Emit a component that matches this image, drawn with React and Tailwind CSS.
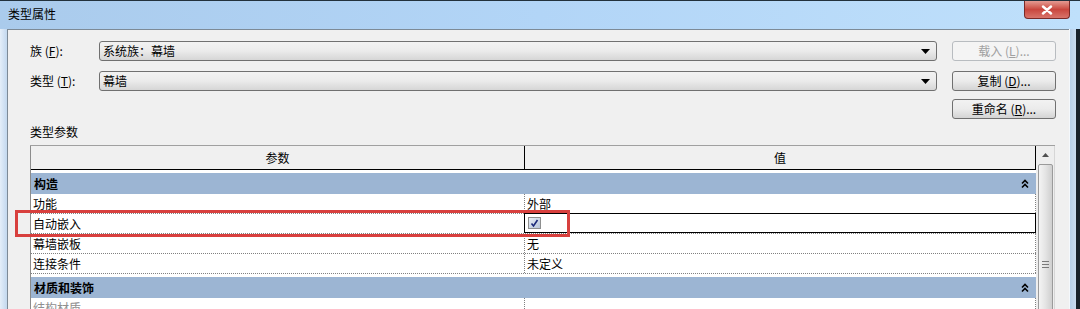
import React from "react";

const font = "font-['Noto_Sans_CJK_SC','Noto_Sans_CJK_JP',sans-serif]";

function Arrow() {
  return (
    <svg width="9" height="5" viewBox="0 0 9 5" className="shrink-0">
      <path d="M0 0 H9 L4.5 5 Z" fill="#000" />
    </svg>
  );
}

function Dropdown({ text }) {
  return (
    <div className="w-[838px] h-[20px] rounded-[3px] border border-[#707070] bg-gradient-to-b from-[#f2f2f2] via-[#ebebeb] to-[#d6d6d6] flex items-center justify-between pl-[3px] pr-[6px]">
      <span className="text-[12px] leading-[18px] text-black">{text}</span>
      <Arrow />
    </div>
  );
}

function Btn({ children, disabled }) {
  return (
    <div
      className={
        disabled
          ? "w-[104px] h-[20px] rounded-[3px] border border-[#b8bcc0] bg-[#f4f4f4] flex items-center justify-center text-[12px] text-[#a0a0a0]"
          : "w-[104px] h-[20px] rounded-[3px] border border-[#707070] bg-gradient-to-b from-[#f2f2f2] via-[#ebebeb] to-[#d4d4d4] flex items-center justify-center text-[12px] text-black"
      }
    >
      {children}
    </div>
  );
}

function Chevrons() {
  return (
    <svg width="8" height="10" viewBox="0 0 8 10">
      <path d="M1 4.5 L4 1.5 L7 4.5" stroke="#000" strokeWidth="1.6" fill="none" />
      <path d="M1 8.5 L4 5.5 L7 8.5" stroke="#000" strokeWidth="1.6" fill="none" />
    </svg>
  );
}

function GroupRow({ label }) {
  return (
    <div className="pt-[3px] bg-white">
      <div className="h-[21px] bg-[#9cb5d3] flex items-center justify-between pl-[3px] pr-[7px]">
        <span className="text-[12px] font-bold text-black">{label}</span>
        <Chevrons />
      </div>
    </div>
  );
}

function DataRow({ label, value, checkbox, muted }) {
  return (
    <div className="h-[20px] flex border-b border-dotted border-[#808080] bg-white">
      <div className={"w-[493px] pl-[2px] text-[12px] leading-[19px] " + (muted ? "text-[#909090]" : "text-black")}>{label}</div>
      {checkbox ? (
        <div className="flex-1 border border-black -mt-px h-[20px] flex items-center pl-[3px]">
          <div className="w-[13px] h-[12px] border border-[#8e8f8f] bg-gradient-to-br from-[#e9eef6] to-[#b9c6da] flex items-center justify-center">
            <svg width="9" height="9" viewBox="0 0 9 9">
              <path d="M1.5 4.5 L3.5 7 L7.5 1" stroke="#1c2a7a" strokeWidth="1.6" fill="none" />
            </svg>
          </div>
        </div>
      ) : (
        <div className="flex-1 border-l border-r border-dotted border-[#808080] pl-[2px] text-[12px] leading-[19px] text-black">{value}</div>
      )}
    </div>
  );
}

export default function App() {
  return (
    <div className={"relative w-[1080px] h-[309px] overflow-hidden bg-[#c5daf0] flex flex-col " + font}>
      {/* Title bar */}
      <div className="h-[29px] shrink-0 border-t border-[#22313c] bg-gradient-to-r from-[#aacbec] via-[#b2d5f7] to-[#bfe0fb] flex items-start justify-between">
        <span className="pl-[8px] pt-[5px] text-[12px] leading-[16px] text-black">类型属性</span>
        <div className="mr-[10px] w-[46px] h-[18px] rounded-b-[4px] border border-t-0 border-[#7a2a28] bg-gradient-to-b from-[#e39a92] via-[#c9463e] to-[#d8736a] flex items-center justify-center">
          <svg width="12" height="10" viewBox="0 0 12 10">
            <path d="M2 1.5 L10 8.5 M10 1.5 L2 8.5" stroke="#ffffff" strokeWidth="2.4" strokeLinecap="round" />
          </svg>
        </div>
      </div>

      {/* Body */}
      <div className="flex flex-1 min-h-0">
        <div className="w-[7px] shrink-0 bg-gradient-to-r from-[#e4eef9] to-[#c3d8ee]" />
        <div className="w-[1062px] shrink-0 bg-[#f0f0f0] border-l border-t border-[#7d8a96] pt-[11px] pl-[22px]">
          <div className="flex items-center h-[20px]">
            <div className="w-[69px] text-[12px] text-black">族 (<span className="underline">F</span>):</div>
            <Dropdown text="系统族：幕墙" />
            <div className="ml-[15px]">
              <Btn disabled>载入 (<span className="underline">L</span>)...</Btn>
            </div>
          </div>
          <div className="flex items-center h-[20px] mt-[10px]">
            <div className="w-[69px] text-[12px] text-black">类型 (<span className="underline">T</span>):</div>
            <Dropdown text="幕墙" />
            <div className="ml-[15px]">
              <Btn>复制 (<span className="underline">D</span>)...</Btn>
            </div>
          </div>
          <div className="flex h-[20px] mt-[8px] pl-[922px]">
            <Btn>重命名 (<span className="underline">R</span>)...</Btn>
          </div>
          <div className="mt-[3px] h-[20px] text-[12px] leading-[20px] text-black">类型参数</div>

          {/* Table */}
          <div className="mt-[3px] flex w-[1025px] border-t border-[#a0a0a0]">
            <div className="w-[1006px] border-l border-[#8c8c8c]">
              <div className="h-[24px] flex border-b border-black bg-[#f0f0f0]">
                <div className="w-[493px] flex items-center justify-center text-[12px] text-black">参数</div>
                <div className="flex-1 border-l border-r border-black flex items-center justify-center text-[12px] text-black">值</div>
              </div>
              <GroupRow label="构造" />
              <DataRow label="功能" value="外部" />
              <DataRow label="自动嵌入" checkbox />
              <DataRow label="幕墙嵌板" value="无" />
              <DataRow label="连接条件" value="未定义" />
              <GroupRow label="材质和装饰" />
              <DataRow label="结构材质" value="" muted />
            </div>
            {/* Scrollbar */}
            <div className="w-[19px] bg-[#eeeeee] border-r border-[#d6d6d6] flex flex-col items-center">
              <div className="h-[18px] flex items-center justify-center">
                <svg width="7" height="4" viewBox="0 0 7 4">
                  <path d="M0 4 L3.5 0 L7 4 Z" fill="#505050" />
                </svg>
              </div>
              <div className="w-[15px] h-[200px] rounded-[2px] border border-[#9a9a9a] bg-gradient-to-r from-[#f4f4f4] via-[#e4e4e4] to-[#cfcfcf] flex flex-col items-center pt-[96px] gap-[2px]">
                <div className="w-[7px] h-px bg-[#7a7a7a]" />
                <div className="w-[7px] h-px bg-[#7a7a7a]" />
                <div className="w-[7px] h-px bg-[#7a7a7a]" />
              </div>
            </div>
          </div>
        </div>
        <div className="flex-1 flex">
          <div className="w-px bg-[#f4f8fc]" />
          <div className="w-[6px] bg-gradient-to-r from-[#b7d0ea] to-[#c9dcf0]" />
          <div className="flex-1 bg-[#18222b]" />
        </div>
      </div>

      {/* Red annotation box */}
      <div className="absolute left-[15px] top-[210px] w-[555px] h-[27px] border-[3px] border-[#d8403e] pointer-events-none" />
    </div>
  );
}
